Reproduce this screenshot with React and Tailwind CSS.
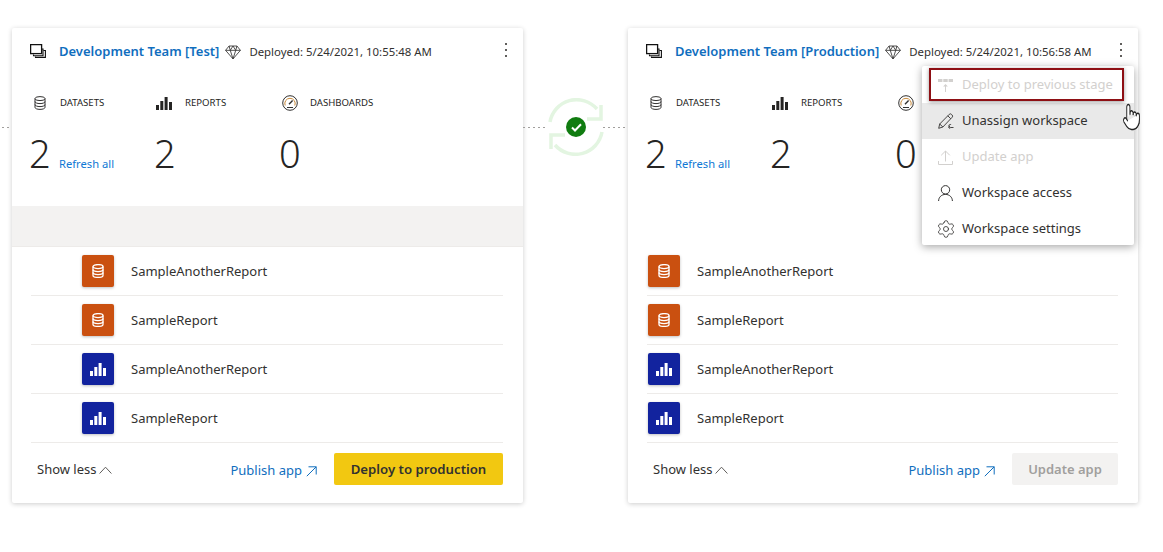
import { Pointer, Settings } from 'lucide-react';

function StackIcon({ className }) {
  return (
    <svg className={className} viewBox="0 0 16 14" fill="none" stroke="#111" strokeWidth="1.1">
      <path d="M3.5 10.5v1.2h9.5V5h-1" />
      <path d="M5.5 12.5v.9H15.4V6.5h-2" />
      <rect x="0.6" y="0.6" width="11" height="9" fill="#fff" strokeWidth="1.3" />
    </svg>
  );
}

function DbIcon({ className, color = '#323130', width = 1 }) {
  return (
    <svg className={className} viewBox="0 0 12 14" fill="none" stroke={color} strokeWidth={width}>
      <ellipse cx="6" cy="2.6" rx="5" ry="2" />
      <path d="M1 2.6v8.8c0 1.1 2.2 2 5 2s5-.9 5-2V2.6" />
      <path d="M1 5.6c0 1.1 2.2 2 5 2s5-.9 5-2M1 8.6c0 1.1 2.2 2 5 2s5-.9 5-2" />
    </svg>
  );
}

function BarsIcon({ className, color = '#252423' }) {
  return (
    <svg className={className} viewBox="0 0 16 13" fill={color}>
      <rect x="0" y="8" width="3" height="5" />
      <rect x="4.3" y="4" width="3" height="9" />
      <rect x="8.6" y="0" width="3" height="13" />
      <rect x="13" y="5" width="3" height="8" />
    </svg>
  );
}

function GaugeIcon({ className }) {
  return (
    <svg className={className} viewBox="0 0 16 16" fill="none" stroke="#323130">
      <circle cx="8" cy="8" r="7.3" />
      <path d="M3.2 10.5A5.2 5.2 0 1 1 12.8 10.5" stroke="#c98a3a" />
      <path d="M7 9.2l3.6-3.6" strokeWidth="1.4" />
      <path d="M5 12.5h6" />
    </svg>
  );
}

function GemIcon({ className }) {
  return (
    <svg className={className} viewBox="0 0 17 15" fill="none" stroke="#323130" strokeWidth="0.9">
      <path d="M4.3 .6h8.4l3.7 4.6-7.9 9.1L.6 5.2z" />
      <path d="M.6 5.2h15.8M5.6 5.2L8.5 14.3l2.9-9.1M4.3.6l1.3 4.6L8.5.6l2.9 4.6L12.7.6" />
    </svg>
  );
}

function DeployBackIcon({ className }) {
  return (
    <svg className={className} viewBox="0 0 15 13" fill="#d2d0ce">
      <rect x="0" y="0" width="4.4" height="3" />
      <rect x="5.3" y="0" width="4.4" height="3" />
      <rect x="10.6" y="0" width="4.4" height="3" />
      <path d="M7.5 5l2.4 2.6H8V13H7V7.6H5.1z" />
    </svg>
  );
}

function UnassignIcon({ className }) {
  return (
    <svg className={className} viewBox="0 0 16 16" fill="none" stroke="#323130" strokeWidth="0.9">
      <path d="M.7 15.3l1-4.3L11.2 1.4a1.6 1.6 0 0 1 2.3 0l.6.6a1.6 1.6 0 0 1 0 2.3L4.9 14z" />
      <path d="M9.8 2.8l3 3M1.7 11l3.2 3" />
      <path d="M15.5 14.5h-3.2a1.5 1.5 0 0 1 0-3h.8M11.8 13.2l-1.1 1.3 1.1 1.2" />
    </svg>
  );
}

function UploadIcon({ className }) {
  return (
    <svg className={className} viewBox="0 0 15 15" fill="none" stroke="#d2d0ce">
      <path d="M7.5 11.5V1M3.2 5.3L7.5 1l4.3 4.3" />
      <path d="M.5 11v3.5h14V11" />
    </svg>
  );
}

function UserIcon({ className }) {
  return (
    <svg className={className} viewBox="0 0 15 16" fill="none" stroke="#323130">
      <circle cx="7.5" cy="4.8" r="4.2" />
      <path d="M.6 16c0-3.8 3-6.6 6.9-6.6s6.9 2.8 6.9 6.6" />
    </svg>
  );
}

function SyncStatus() {
  return (
    <div className="relative w-[58px] h-[58px] shrink-0 ml-[2px]">
      <svg className="w-full h-full" viewBox="0 0 58 58" fill="none" stroke="#e3f5e1" strokeWidth="3.5">
        <path d="M3 24A27 27 0 0 1 50 11" />
        <path d="M54 7v14H40" />
        <path d="M55 34A27 27 0 0 1 8 47" />
        <path d="M4 51V37h14" />
      </svg>
      <div className="absolute left-[19px] top-[19px] w-[20px] h-[20px] rounded-full bg-[#107c10] flex items-center justify-center">
        <svg className="w-[11px] h-[9px]" viewBox="0 0 11 9" fill="none" stroke="#fff" strokeWidth="2">
          <path d="M1 4.5l3 3L10 1.2" />
        </svg>
      </div>
    </div>
  );
}

function Stat({ icon, label, value, refresh, iconBox }) {
  return (
    <div className="w-[125px] shrink-0">
      <div className="flex items-center h-4">
        <div className={iconBox}>{icon}</div>
        <span className="text-[9.6px] text-[#252423] uppercase">{label}</span>
      </div>
      <div className="flex items-baseline mt-[18px] h-[48px]">
        <span className="text-[38px] leading-[48px] font-light text-[#252423] w-[30px]">{value}</span>
        {refresh && <span className="text-[11.2px] text-[#0f78d4]">Refresh all</span>}
      </div>
    </div>
  );
}

function ItemRow({ name, kind, indent }) {
  return (
    <div className={`flex items-center h-[49px] border-b border-[#edebe9] ${indent}`}>
      <div className={`w-8 h-8 rounded-[2px] flex items-center justify-center shadow-[0_1px_3px_rgba(0,0,0,0.25)] ${kind === 'data' ? 'bg-[#ca5010]' : 'bg-[#12239e]'}`}>
        {kind === 'data'
          ? <DbIcon className="w-3 h-[14px]" color="#fff" width={1.3} />
          : <BarsIcon className="w-4 h-[13px]" color="#fff" />}
      </div>
      <span className="ml-[17px] mt-[1px] text-[13px] text-[#323130]">{name}</span>
    </div>
  );
}

function StageCard({ title, deployed, band, indent, button, widthClass }) {
  return (
    <div className={`${widthClass} h-[475px] shrink-0 bg-white rounded-[2px] shadow-[0_1px_5px_rgba(0,0,0,0.2)] flex flex-col`}>
      <div className="flex items-center h-[46px] mt-[1px] pl-[18px] pr-[16px]">
        <StackIcon className="w-4 h-[14px] shrink-0 -mt-[3px]" />
        <span className="ml-[13px] text-[13px] font-semibold text-[#106ebe] whitespace-nowrap">{title}</span>
        <GemIcon className="w-4 h-[15px] ml-[6px] shrink-0" />
        <span className="ml-[8px] text-[11.4px] text-[#323130] whitespace-nowrap">{deployed}</span>
        <div className="ml-auto flex flex-col gap-1 -mt-[5px]">
          <i className="block w-[2px] h-[2px] bg-[#605e5c]" />
          <i className="block w-[2px] h-[2px] bg-[#605e5c]" />
          <i className="block w-[2px] h-[2px] bg-[#605e5c]" />
        </div>
      </div>
      <div className="flex pl-[17px] mt-[20px] h-[111px]">
        <Stat value="2" label="Datasets" refresh iconBox="w-[31px] pl-[5px]" icon={<DbIcon className="w-3 h-[14px]" />} />
        <Stat value="2" label="Reports" iconBox="w-[31px] pl-[2px]" icon={<BarsIcon className="w-4 h-[13px]" />} />
        <Stat value="0" label="Dashboards" iconBox="w-[31px] pl-[3px]" icon={<GaugeIcon className="w-4 h-4" />} />
      </div>
      <div className={`h-[41px] shrink-0 ${band ? 'bg-[#f3f2f1] border-b border-[#edebe9]' : ''}`} />
      <div className="flex flex-col ml-[19px] mr-[20px]">
        <ItemRow name="SampleAnotherReport" kind="data" indent={indent} />
        <ItemRow name="SampleReport" kind="data" indent={indent} />
        <ItemRow name="SampleAnotherReport" kind="report" indent={indent} />
        <ItemRow name="SampleReport" kind="report" indent={indent} />
      </div>
      <div className="flex items-start h-[60px] pt-[10px] pl-[25px] pr-[20px]">
        <span className="text-[13px] leading-8 text-[#323130]">Show less</span>
        <svg className="w-[13px] h-[8px] ml-[2px] mt-[13px] shrink-0" viewBox="0 0 13 8" fill="none" stroke="#605e5c">
          <path d="M.6 7.5L6.5 1.2l5.9 6.3" />
        </svg>
        <span className="ml-auto mt-[1px] text-[13px] leading-8 text-[#106ebe]">Publish app</span>
        <svg className="w-[11px] h-[11px] ml-[4px] mr-[17px] mt-[13px] shrink-0" viewBox="0 0 11 11" fill="none" stroke="#106ebe">
          <path d="M.8 10.2L10.2.8M2.5.8h7.7v7.7" />
        </svg>
        {button}
      </div>
    </div>
  );
}

function MenuItem({ icon, label, muted, active }) {
  return (
    <div className={`flex items-center h-9 pl-4 ${active ? 'bg-[#e9e9e9]' : ''}`}>
      <div className="w-6 shrink-0">{icon}</div>
      <span className={`text-[13px] ${muted ? 'text-[#d2d0ce]' : 'text-[#323130]'}`}>{label}</span>
    </div>
  );
}

export default function App() {
  const dash = 'block h-px bg-[repeating-linear-gradient(90deg,#a19f9d_0_2px,transparent_2px_5px)]';
  return (
    <div className="relative w-[1163px] h-[552px] bg-white overflow-hidden" style={{ fontFamily: '"Noto Sans", "Open Sans", sans-serif' }}>
      <div className="flex pl-3 pt-7">
        <StageCard
          widthClass="w-[511px]"
          title="Development Team [Test]"
          deployed="Deployed: 5/24/2021, 10:55:48 AM"
          band
          indent="pl-[51px]"
          button={
            <button className="w-[169px] h-8 pt-[1px] rounded-[2px] bg-[#f2c811] text-[13.2px] font-semibold text-[#323130]">
              Deploy to production
            </button>
          }
        />
        <div className="w-[105px] shrink-0 flex items-center h-[198px]">
          <i className={`${dash} w-[22px] shrink-0`} />
          <SyncStatus />
          <i className={`${dash} w-[22px] -ml-[2px] shrink-0`} />
        </div>
        <StageCard
          widthClass="w-[510px]"
          title="Development Team [Production]"
          deployed="Deployed: 5/24/2021, 10:56:58 AM"
          indent="pl-[1px]"
          button={
            <button className="w-[106px] h-8 pt-[1px] rounded-[2px] bg-[#f3f2f1] text-[13px] font-semibold text-[#a19f9d]">
              Update app
            </button>
          }
        />
      </div>

      <i className={`absolute left-[2px] top-[127px] w-[9px] ${dash}`} />

      <div className="absolute left-[922px] top-[66px] w-[212px] h-[179px] bg-white rounded-[2px] shadow-[0_2px_8px_rgba(0,0,0,0.35)] py-[1px]">
        <MenuItem muted label="Deploy to previous stage" icon={<DeployBackIcon className="w-[15px] h-[13px]" />} />
        <MenuItem active label="Unassign workspace" icon={<UnassignIcon className="w-4 h-4" />} />
        <MenuItem muted label="Update app" icon={<UploadIcon className="w-[15px] h-[15px]" />} />
        <MenuItem label="Workspace access" icon={<UserIcon className="w-[15px] h-4" />} />
        <MenuItem label="Workspace settings" icon={<Settings className="w-5 h-5 -ml-[2px] text-[#323130]" strokeWidth={1} />} />
      </div>
      <div className="absolute left-[929px] top-[68px] w-[195px] h-[33px] border-[2.5px] border-[#8e0f14] shadow-[0_1px_4px_rgba(0,0,0,0.4)]" />
      <Pointer className="absolute left-[1122px] top-[102px] w-[19px] h-[30px] text-[#222]" fill="#fff" strokeWidth={1.2} preserveAspectRatio="none" />
    </div>
  );
}
